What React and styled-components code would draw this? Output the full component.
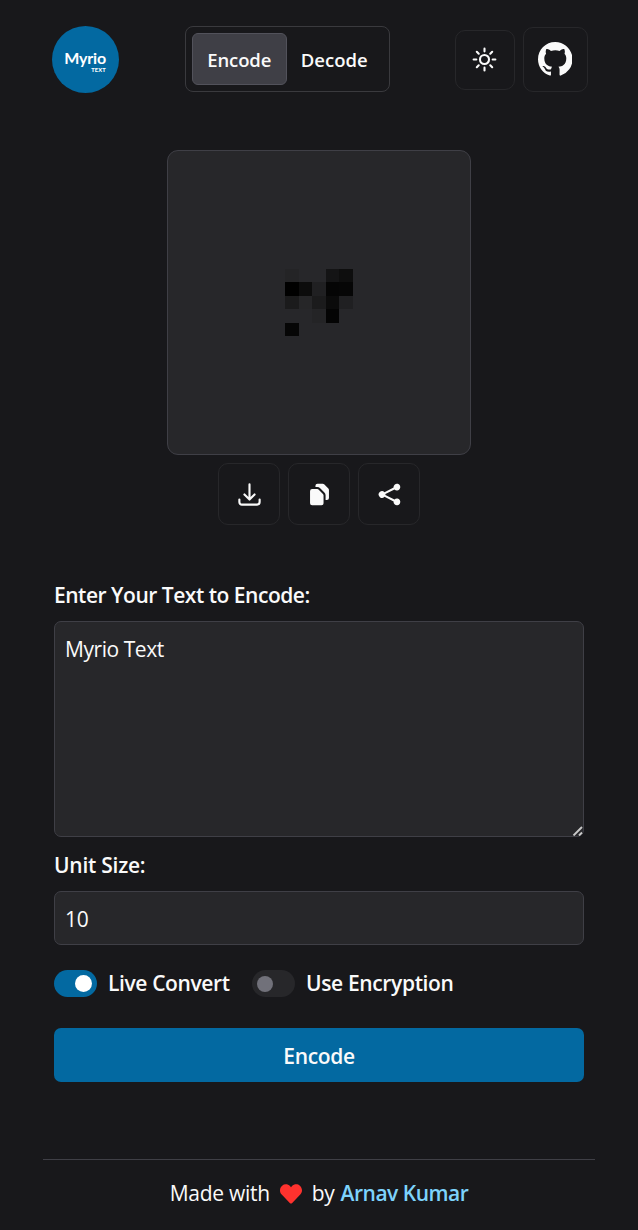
import React, { useState } from "react";
import styled, { createGlobalStyle } from "styled-components";
import {
  HiOutlineArrowDownTray,
  HiMiniDocumentDuplicate,
  HiMiniShare,
  HiOutlineSun,
} from "react-icons/hi2";
import { BsGithub } from "react-icons/bs";
import { FaHeart } from "react-icons/fa";

const GlobalStyle = createGlobalStyle`
  *, *::before, *::after { box-sizing: border-box; }
  html { color-scheme: dark; }
  body {
    margin: 0;
    background: #18181b;
    color: #fafafa;
    font-family: "Open Sans", "Noto Sans", sans-serif;
    font-size: 21px;
  }
  button, input, textarea { font: inherit; color: inherit; }
`;

const Page = styled.div`
  height: 1230px;
  padding: 26px 43px 0;
  display: flex;
  flex-direction: column;
`;

const Header = styled.header`
  height: 67px;
  padding: 0 7.5px 0 9px;
  display: flex;
  align-items: center;
  justify-content: space-between;
`;

const Logo = styled.a`
  width: 67px;
  height: 67px;
  border-radius: 50%;
  background: #0369a1;
  color: #fff;
  display: flex;
  flex-direction: column;
  justify-content: center;
  align-items: flex-end;
  padding: 3px 13px 0 0;
  font-family: Lato, sans-serif;
  font-weight: 700;
`;

const LogoName = styled.span`
  font-size: 16px;
  line-height: 16px;
  letter-spacing: ${(p) => p.$tracking}px;
`;

const LogoSub = styled.span`
  margin-top: 1px;
  font-size: 5.7px;
  line-height: 6px;
  font-weight: 900;
  letter-spacing: 0.2px;
`;

const Tabs = styled.nav`
  display: flex;
  width: 205px;
  height: 66px;
  padding: 6px;
  margin: -1px 0 0 2px;
  border: 1px solid #3a3a3e;
  border-radius: 8px;
`;

const Tab = styled.button`
  width: ${(p) => p.$width}px;
  height: 52px;
  padding: 0 1px 0 0;
  border: 1px solid ${(p) => (p.$active ? "#52525b" : "transparent")};
  border-radius: 6px;
  background: ${(p) => (p.$active ? "#3f3f46" : "transparent")};
  font-size: 18.5px;
  font-weight: 600;
  letter-spacing: ${(p) => p.$tracking}px;
`;

const Actions = styled.div`
  display: flex;
  align-items: center;
  gap: 8px;
`;

const IconButton = styled.button`
  width: ${(p) => p.$size}px;
  height: ${(p) => p.$size}px;
  padding: 0;
  border: 1px solid #27272a;
  border-radius: 10px;
  background: transparent;
  display: flex;
  align-items: center;
  justify-content: center;
  svg { display: block; }
`;

const Preview = styled.section`
  margin-top: 57px;
  display: flex;
  flex-direction: column;
  align-items: center;
  gap: 8px;
`;

const Canvas = styled.div`
  width: 304px;
  height: 305px;
  border: 1px solid #3f3f46;
  border-radius: 11px;
  background: #27272a;
  display: flex;
  align-items: center;
  justify-content: center;
`;

const PixelGrid = styled.div`
  display: grid;
  grid-template-columns: repeat(5, 13.6px);
  grid-auto-rows: 13.5px;
`;

const Pixel = styled.span`
  background: ${(p) => p.$color};
`;

const Form = styled.form`
  margin: 54px 11px 0;
  display: flex;
  flex-direction: column;
`;

const Label = styled.label`
  height: 32px;
  line-height: 32px;
  margin-bottom: 10px;
  font-weight: 600;
  letter-spacing: ${(p) => p.$tracking}px;
`;

const fieldStyle = `
  display: block;
  width: 100%;
  margin: 0;
  padding: 11px 10px 9px;
  border: 1px solid #3f3f46;
  border-radius: 7px;
  background: #27272a;
  outline: none;
`;

const TextAreaWrap = styled.div`
  position: relative;
  margin-bottom: 12px;
`;

const TextArea = styled.textarea`
  ${fieldStyle}
  height: 216px;
  line-height: 32px;
  letter-spacing: -0.45px;
  resize: none;
`;

const ResizeGrip = styled.svg`
  position: absolute;
  right: 1px;
  bottom: 1px;
  pointer-events: none;
`;

const Input = styled.input`
  ${fieldStyle}
  height: 54px;
  letter-spacing: -0.3px;
`;

const Switches = styled.div`
  margin-top: 25px;
  height: 27px;
  display: flex;
  align-items: center;
`;

const SwitchLabel = styled.span`
  width: ${(p) => p.$width}px;
  margin-left: 11px;
  font-weight: 600;
  line-height: 27px;
  white-space: nowrap;
  letter-spacing: ${(p) => p.$tracking}px;
`;

const Switch = styled.button`
  width: 43px;
  height: 27px;
  padding: 0 5px;
  border: 0;
  border-radius: 14px;
  display: flex;
  align-items: center;
  justify-content: ${(p) => (p.$on ? "flex-end" : "flex-start")};
  background: ${(p) => (p.$on ? "#0369a1" : "#27272a")};
  &::after {
    content: "";
    width: ${(p) => (p.$on ? 17 : 16)}px;
    height: ${(p) => (p.$on ? 17 : 16)}px;
    border-radius: 50%;
    background: ${(p) => (p.$on ? "#fff" : "#71717a")};
  }
`;

const Submit = styled.button`
  margin-top: 31px;
  height: 54px;
  padding: 2px 0 0;
  border: 0;
  border-radius: 7px;
  background: #0369a1;
  font-weight: 600;
  letter-spacing: -0.35px;
`;

const Footer = styled.footer`
  margin-top: 77px;
  height: 71px;
  padding-bottom: 5px;
  border-top: 1px solid #3f3f46;
  display: flex;
  align-items: center;
  justify-content: center;
  letter-spacing: -0.28px;
  white-space: pre;
  svg { display: block; margin: 3px 10px 0; color: #ff322e; }
`;

const Author = styled.a`
  margin-left: 6px;
  color: #7dd3fc;
  font-weight: 600;
  letter-spacing: ${(p) => p.$tracking}px;
`;

const PIXELS = [
  "#242426", "#27272a", "#27272a", "#141415", "#0e0e0e",
  "#000000", "#0c0c0c", "#202022", "#050505", "#060606",
  "#1b1b1c", "#262628", "#1b1b1c", "#0b0b0b", "#202022",
  "#27272a", "#27272a", "#242426", "#040404", "#27272a",
  "#060606", "#27272a", "#27272a", "#27272a", "#27272a",
];

export default function App() {
  const [mode, setMode] = useState("Encode");
  const [live, setLive] = useState(true);
  const [encrypt, setEncrypt] = useState(false);

  return (
    <>
      <GlobalStyle />
      <Page>
        <Header>
          <Logo>
            <LogoName $tracking={-0.15}>Myrio</LogoName>
            <LogoSub>TEXT</LogoSub>
          </Logo>
          <Tabs>
            <Tab $width={95} $active={mode === "Encode"} $tracking={-0.15} onClick={() => setMode("Encode")}>
              Encode
            </Tab>
            <Tab $width={95} $active={mode === "Decode"} $tracking={0} onClick={() => setMode("Decode")}>
              Decode
            </Tab>
          </Tabs>
          <Actions>
            <IconButton $size={60} aria-label="Theme">
              <HiOutlineSun size={29} strokeWidth={1.75} />
            </IconButton>
            <IconButton $size={65} aria-label="GitHub">
              <BsGithub size={34.5} />
            </IconButton>
          </Actions>
        </Header>

        <Preview>
          <Canvas>
            <PixelGrid>
              {PIXELS.map((color, i) => (
                <Pixel key={i} $color={color} />
              ))}
            </PixelGrid>
          </Canvas>
          <Actions>
            <IconButton $size={62} aria-label="Download">
              <HiOutlineArrowDownTray size={27} strokeWidth={1.9} />
            </IconButton>
            <IconButton $size={62} aria-label="Copy">
              <HiMiniDocumentDuplicate size={27} />
            </IconButton>
            <IconButton $size={62} aria-label="Share">
              <HiMiniShare size={27} />
            </IconButton>
          </Actions>
        </Preview>

        <Form onSubmit={(e) => e.preventDefault()}>
          <Label $tracking={-0.48} htmlFor="text">Enter Your Text to Encode:</Label>
          <TextAreaWrap>
            <TextArea id="text" defaultValue="Myrio Text" spellCheck={false} />
            <ResizeGrip width="11" height="11" viewBox="0 0 11 11" stroke="#c8c8c8" strokeWidth="1.9">
              <path d="M1.5 10.5 10 2M7 10.5 10 7.5" />
            </ResizeGrip>
          </TextAreaWrap>
          <Label $tracking={-0.25} htmlFor="unit">Unit Size:</Label>
          <Input id="unit" defaultValue="10" />
          <Switches>
            <Switch type="button" $on={live} onClick={() => setLive(!live)} aria-label="Live Convert" />
            <SwitchLabel $width={144} $tracking={-0.38}>Live Convert</SwitchLabel>
            <Switch type="button" $on={encrypt} onClick={() => setEncrypt(!encrypt)} aria-label="Use Encryption" />
            <SwitchLabel $width={160} $tracking={-0.36}>Use Encryption</SwitchLabel>
          </Switches>
          <Submit>Encode</Submit>
        </Form>

        <Footer>
          <span>Made with</span>
          <FaHeart size={22} />
          <span>by</span>
          <Author $tracking={-0.5}>Arnav Kumar</Author>
        </Footer>
      </Page>
    </>
  );
}
